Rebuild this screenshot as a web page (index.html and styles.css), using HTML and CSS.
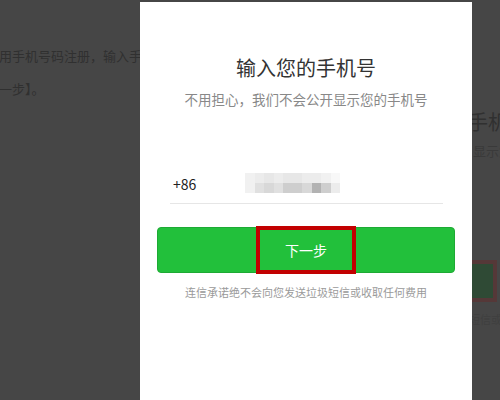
FILE: index.html
```html
<!DOCTYPE html>
<html lang="zh-CN">
<head>
  <meta charset="UTF-8">
  <title>输入您的手机号</title>
  <link rel="stylesheet" href="styles.css">
</head>
<body>
  <div class="page">
    <div class="bg-left">
      <p class="bg-line first">用手机号码注册，输入手</p>
      <p class="bg-line">一步】。</p>
    </div>

    <div class="modal">
      <h1 class="title">输入您的手机号</h1>
      <p class="subtitle">不用担心，我们不会公开显示您的手机号</p>

      <div class="phone-row">
        <span class="code">+86</span>
        <div class="blur">
          <span class="s1"></span><span class="s2"></span><span class="s3"></span><span class="s2"></span><span class="s3"></span><span class="s3"></span><span class="s2"></span><span class="s2"></span><span class="s1"></span><span class="s0"></span>
          <span class="s1"></span><span class="s4"></span><span class="s5"></span><span class="s4"></span><span class="s6"></span><span class="s6"></span><span class="s5"></span><span class="s7"></span><span class="s6"></span><span class="s2"></span>
        </div>
      </div>

      <button class="next-btn"><span class="mark">下一步</span></button>

      <p class="note">连信承诺绝不会向您发送垃圾短信或收取任何费用</p>
    </div>

    <div class="bg-right">
      <p class="r-title">手机号</p>
      <p class="r-sub">显示您</p>
      <div class="r-btn"></div>
      <p class="r-note">短信或</p>
    </div>
  </div>
</body>
</html>
```

FILE: styles.css
```css
body {
  margin: 0;
  background-color: #464646;
  font-family: "Noto Sans CJK SC", "Noto Sans", sans-serif;
}
.page {
  display: flex;
  width: 500px;
  height: 400px;
  overflow: hidden;
}
.bg-left {
  width: 140px;
  flex-shrink: 0;
  overflow: hidden;
  padding-top: 46px;
}
.bg-line {
  margin: 0 0 0 -1px;
  font-size: 13px;
  line-height: 20px;
  color: #303030;
  white-space: nowrap;
}
.bg-line.first {
  margin-bottom: 13px;
}

.modal {
  width: 332px;
  flex-shrink: 0;
  margin-top: 2px;
  background-color: #fff;
  box-sizing: border-box;
  padding: 52px 0 0;
  text-align: center;
}
.title {
  margin: 0;
  font-size: 20px;
  line-height: 28px;
  font-weight: normal;
  color: #333;
}
.subtitle {
  margin: 7px 0 0;
  font-size: 13.5px;
  line-height: 20px;
  color: #888;
}
.phone-row {
  display: flex;
  align-items: center;
  margin: 55px 29px 0 30px;
  height: 39px;
  border-bottom: 1px solid #e6e6e6;
  padding-left: 3px;
}
.code {
  width: 72px;
  text-align: left;
  font-size: 14px;
  color: #222;
}
.blur {
  display: grid;
  grid-template-columns: repeat(10, 9.5px);
  grid-auto-rows: 10px;
  margin-top: -2px;
}
.s0 { background-color: #f8f8f8; }
.s1 { background-color: #f1f1f1; }
.s2 { background-color: #ececec; }
.s3 { background-color: #e7e7e7; }
.s4 { background-color: #e0e0e0; }
.s5 { background-color: #d8d8d8; }
.s6 { background-color: #cecece; }
.s7 { background-color: #b2b2b2; }

.next-btn {
  display: flex;
  align-items: center;
  justify-content: center;
  width: 298px;
  height: 46px;
  margin: 23px 0 0 17px;
  padding: 0;
  background-color: #22c03b;
  border: 1px solid #1eaa34;
  border-radius: 4px;
  font-family: inherit;
}
.mark {
  display: flex;
  align-items: center;
  justify-content: center;
  flex-shrink: 0;
  width: 100px;
  height: 48px;
  box-sizing: border-box;
  border: 4px solid #c20000;
  color: #fff;
  font-size: 14px;
}
.note {
  margin: 11px 0 0;
  font-size: 11px;
  line-height: 16px;
  color: #9a9a9a;
}

.bg-right {
  flex: 1;
  overflow: hidden;
  padding-top: 108px;
}
.r-title {
  margin: 0 0 0 -4px;
  font-size: 20px;
  line-height: 28px;
  color: #303030;
  white-space: nowrap;
}
.r-sub {
  margin: 5px 0 0 1px;
  font-size: 13px;
  line-height: 20px;
  color: #3a3a3a;
  white-space: nowrap;
}
.r-btn {
  width: 25px;
  height: 42px;
  margin-top: 99px;
  box-sizing: border-box;
  border: 4px solid #553838;
  border-left: none;
  background-color: #2f4a35;
}
.r-note {
  margin: 9px 0 0 -3px;
  font-size: 11px;
  line-height: 16px;
  color: #3f3f3f;
  white-space: nowrap;
}
```
